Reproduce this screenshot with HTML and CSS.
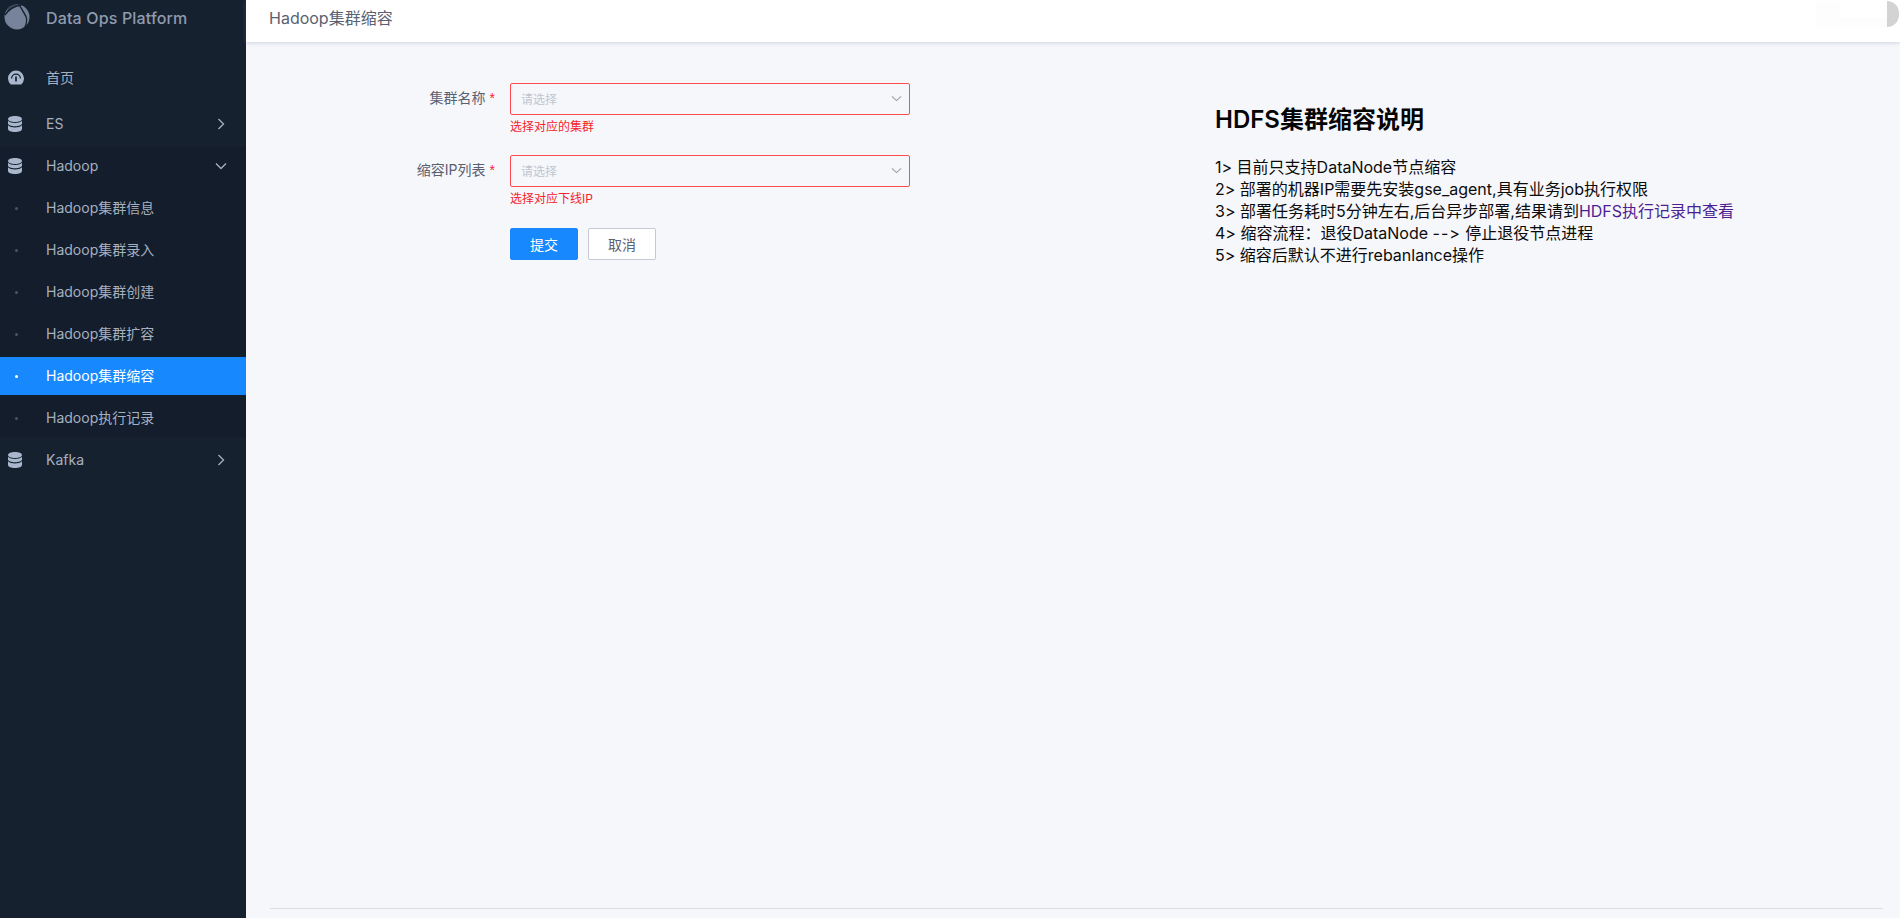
FILE: index.html
```html
<!DOCTYPE html>
<html lang="zh">
<head>
<meta charset="utf-8">
<title>Hadoop集群缩容</title>
<link rel="stylesheet" href="styles.css">
</head>
<body>
<div class="app">
  <aside class="sidebar">
    <div class="brand">
      <svg class="logo" viewBox="0 0 26 26" width="26" height="26">
        <circle cx="13" cy="13" r="12.5" fill="#76839a"/>
        <path d="M4 3.500C8 1 12 0 16 .2C11 1.500 7 4 2.500 9.500Z" fill="#3a4659"/>
        <path d="M1 11C5 5 11 2 17 1" fill="none" stroke="#162130" stroke-width="1.400"/>
        <path d="M15 .6C18 5 20 9 22 12.500C23 15 22.500 20 21 23" fill="none" stroke="#162130" stroke-width="1.400"/>
      </svg>
      <span class="brand-name">Data Ops Platform</span>
    </div>
    <nav class="menu">
      <a class="item top">
        <svg class="ico" viewBox="0 0 18 18" width="18" height="18"><g transform="translate(1 0)"><path d="M3.700 15.500A8 8 0 1 1 14.300 15.500Z" fill="#a8b7cc"/><path d="M4.600 9.500a4.400 4.400 0 0 1 8.800 0" fill="none" stroke="#162130" stroke-width="1.200"/><path d="M9 7.500v5" stroke="#162130" stroke-width="1.700"/></g></svg>
        <span class="item-text">首页</span>
      </a>
      <a class="item top">
        <svg class="ico" viewBox="0 0 18 18" width="18" height="18"><use href="#db"/></svg>
        <span class="item-text">ES</span>
        <svg class="chev" viewBox="0 0 12 12" width="12" height="12"><path d="M3.500 1 8.500 6 3.500 11" /></svg>
      </a>
      <div class="group">
        <a class="item head">
          <svg class="ico" viewBox="0 0 18 18" width="18" height="18">
            <defs>
              <g id="db">
                <path d="M2 4C2 2.300 5.100 1 9 1s7 1.300 7 3S12.900 7 9 7 2 5.700 2 4Z" fill="#a8b7cc"/>
                <path d="M2 5.800C3.400 7.300 6.200 8 9 8s5.600-.7 7-2.200V8.500C16 10 12.900 11.200 9 11.200S2 10 2 8.500Z" fill="#a8b7cc"/>
                <path d="M2 10.300C3.400 11.800 6.200 12.500 9 12.500s5.600-.7 7-2.200V14c0 1.700-3.100 3-7 3s-7-1.300-7-3Z" fill="#a8b7cc"/>
              </g>
            </defs>
            <use href="#db"/>
          </svg>
          <span class="item-text">Hadoop</span>
          <svg class="chev" viewBox="0 0 12 12" width="12" height="12"><path d="M1 3.500 6 8.500 11 3.500" /></svg>
        </a>
        <a class="item sub"><i class="dot"></i><span class="item-text">Hadoop集群信息</span></a>
        <a class="item sub"><i class="dot"></i><span class="item-text">Hadoop集群录入</span></a>
        <a class="item sub"><i class="dot"></i><span class="item-text">Hadoop集群创建</span></a>
        <a class="item sub"><i class="dot"></i><span class="item-text">Hadoop集群扩容</span></a>
        <a class="item sub active"><i class="dot"></i><span class="item-text">Hadoop集群缩容</span></a>
        <a class="item sub"><i class="dot"></i><span class="item-text">Hadoop执行记录</span></a>
      </div>
      <a class="item top">
        <svg class="ico" viewBox="0 0 18 18" width="18" height="18"><use href="#db"/></svg>
        <span class="item-text">Kafka</span>
        <svg class="chev" viewBox="0 0 12 12" width="12" height="12"><path d="M3.500 1 8.500 6 3.500 11" /></svg>
      </a>
    </nav>
  </aside>
  <main class="main">
    <header class="topbar">
      <h1 class="page-title">Hadoop集群缩容</h1>
      <div class="top-right">
        <span class="ghost"><i class="ghost-tab"></i><i class="ghost-bar"></i></span>
        <span class="avatar"></span>
      </div>
    </header>
    <div class="content">
      <form class="form">
        <div class="field">
          <label class="label">集群名称<b class="star">*</b></label>
          <div class="control">
            <div class="select"><span class="placeholder">请选择</span><svg class="arrow" viewBox="0 0 12 12" width="11" height="11"><path d="M1 3.700 6 8.300 11 3.700"/></svg></div>
            <div class="error">选择对应的集群</div>
          </div>
        </div>
        <div class="field">
          <label class="label">缩容IP列表<b class="star">*</b></label>
          <div class="control">
            <div class="select"><span class="placeholder">请选择</span><svg class="arrow" viewBox="0 0 12 12" width="11" height="11"><path d="M1 3.700 6 8.300 11 3.700"/></svg></div>
            <div class="error">选择对应下线IP</div>
          </div>
        </div>
        <div class="actions">
          <button type="button" class="btn primary">提交</button>
          <button type="button" class="btn">取消</button>
        </div>
      </form>
      <section class="notes">
        <h2 class="notes-title">HDFS集群缩容说明</h2>
        <p class="note">1&gt; 目前只支持DataNode节点缩容</p>
        <p class="note">2&gt; 部署的机器IP需要先安装gse_agent,具有业务job执行权限</p>
        <p class="note">3&gt; 部署任务耗时5分钟左右,后台异步部署,结果请到<a class="link">HDFS执行记录中查看</a></p>
        <p class="note">4&gt; 缩容流程：退役DataNode <span class="dashes">--&gt;</span> 停止退役节点进程</p>
        <p class="note">5&gt; 缩容后默认不进行rebanlance操作</p>
      </section>
    </div>
    <footer class="footer"></footer>
  </main>
</div>
</body>
</html>
```
FILE: styles.css
```css
* { box-sizing: border-box; }
html, body { margin: 0; padding: 0; height: 100%; overflow: hidden; }
body {
  font-family: Inter, "Noto Sans CJK SC", sans-serif;
  font-size: 14px;
  font-variant-ligatures: none;
  font-feature-settings: "calt" 0, "liga" 0;
  background: #f6f7fb;
}
.app { display: flex; height: 918px; }

.sidebar { width: 246px; flex: none; background: #162130; }
.brand { height: 55px; display: flex; align-items: flex-start; padding: 4px 0 0 4px; }
.logo { flex: none; }
.brand-name {
  margin-left: 16px; margin-top: 4px;
  font-size: 16px; font-weight: 500; line-height: 20px; letter-spacing: .15px;
  color: #8f9bae;
}
.menu { display: flex; flex-direction: column; }
.item {
  display: flex; align-items: center; height: 38px;
  color: #a6b0bf; line-height: 20px; position: relative;
}
.item.top { margin: 4px 0; }
.item.sub { margin-top: 4px; }
.group { background: #131d2c; }
.ico { flex: none; margin-left: 6px; }
.item-text { margin-left: 22px; }
.chev {
  position: absolute; top: 13px; right: 19px;
  fill: none; stroke: #a6b0bf; stroke-width: 1.300;
}
.dot {
  flex: none; width: 3px; height: 3px; margin-left: 15px;
  border-radius: 50%; background: #4a5567;
}
.sub .item-text { margin-left: 28px; }
.item.active { background: #1888ff; color: #fff; }
.active .dot { background: #fff; }

.main { flex: 1; min-width: 0; display: flex; flex-direction: column; }
.topbar {
  height: 42px; flex: none; background: #fff;
  display: flex; align-items: flex-start; justify-content: space-between;
  padding: 0 0 0 23px;
  box-shadow: 0 1px 4px rgba(120,130,170,.3);
}
.page-title {
  margin: 6px 0 0; font-size: 16px; font-weight: 400; line-height: 24px; color: #5a6170;
}
.top-right { display: flex; align-items: flex-start; padding-top: 1px; }
.ghost { width: 71px; height: 26px; display: flex; flex-direction: column; }
.ghost-tab { width: 24px; height: 17px; background: #fdfdfd; }
.ghost-bar { height: 9px; background: #fdfdfd; }
.avatar { width: 12px; height: 26px; background: #d3d3d3; border-radius: 0 13px 13px 0; margin-right: 1px; }

.content { flex: 1; display: grid; grid-template-columns: 969px 1fr; min-height: 0; }

.form { padding-top: 41px; }
.field { display: flex; height: 72px; }
.label {
  width: 264px; flex: none; padding-right: 15px;
  display: flex; justify-content: flex-end; align-items: flex-start;
  line-height: 30px; color: #5a6170;
}
.star { color: #f5222d; font-weight: 400; margin-left: 4px; font-family: "Liberation Sans", sans-serif; }
.control { width: 400px; }
.select {
  height: 32px; background: transparent;
  border: 1px solid #ff4d4f; border-radius: 2px;
  display: flex; align-items: center; justify-content: space-between;
  padding: 0 7px 2px 10px;
}
.placeholder { color: #bfc6d0; font-size: 12px; }
.arrow { fill: none; stroke: #9aa0a8; stroke-width: 1.200; }
.error { color: #f5222d; font-size: 12px; line-height: 18px; margin-top: 3px; }

.actions { display: flex; gap: 10px; margin-left: 264px; padding-top: 1px; }
.btn {
  width: 68px; height: 32px; padding: 0; font: inherit; font-size: 14px;
  background: #fff; color: #5a6170; border: 1px solid #c6c9cf; border-radius: 2px;
}
.btn.primary { background: #1888ff; border-color: #1888ff; color: #fff; }

.notes { padding-top: 61px; color: #0b0b0b; }
.notes-title { margin: 0 0 19px; font-size: 24px; font-weight: 600; line-height: 34px; color: #050505; }
.note { margin: 0; font-size: 16px; line-height: 22px; }
.link { color: #4e1f92; }
.dashes { letter-spacing: 1px; }

.footer { flex: none; height: 10px; margin: 0 17px 0 24px; border-top: 1px solid #dcdde3; }
```
